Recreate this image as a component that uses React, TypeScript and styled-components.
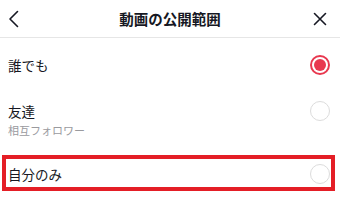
import React from 'react';
import styled, { createGlobalStyle } from 'styled-components';

const GlobalStyle = createGlobalStyle`
  html, body {
    margin: 0;
    padding: 0;
    background: #ffffff;
  }
  body {
    font-family: "Noto Sans CJK JP", "Noto Sans", sans-serif;
    color: #161823;
  }
`;

const Screen = styled.div`
  width: 340px;
  height: 208px;
  background: #ffffff;
  overflow: hidden;
`;

const Header = styled.div`
  height: 37px;
  border-bottom: 1px solid #e6e6e6;
  display: grid;
  grid-template-columns: 40px 1fr 40px;
  align-items: center;
`;

const IconButton = styled.div<{ $align: 'start' | 'end' }>`
  display: flex;
  justify-content: ${p => (p.$align === 'start' ? 'flex-start' : 'flex-end')};
  padding: ${p => (p.$align === 'start' ? '0 0 0 8px' : '0 13px 0 0')};
  svg {
    display: block;
  }
`;

const Title = styled.h1`
  margin: 0;
  text-align: center;
  font-size: 14.5px;
  font-weight: 700;
  line-height: 20px;
  color: #161823;
  letter-spacing: 0;
`;

const Row = styled.div<{ $height?: number }>`
  display: flex;
  align-items: center;
  justify-content: space-between;
  height: ${p => (p.$height ? `${p.$height}px` : 'auto')};
  padding: 0 10px 0 8px;
`;

const TopRow = styled(Row)`
  align-items: flex-start;
  padding-top: 10px;
  padding-bottom: 16px;
`;

const Label = styled.div`
  display: flex;
  flex-direction: column;
`;

const Name = styled.span`
  font-size: 13.5px;
  line-height: 20px;
  color: #161823;
`;

const Sub = styled.span`
  font-size: 11px;
  line-height: 18px;
  color: #9a9a9e;
`;

const Highlight = styled.div`
  margin: 0 5px 0 2px;
  height: 36px;
  box-sizing: border-box;
  border: 4px solid #e41e26;
`;

const HighlightRow = styled(Row)`
  height: 100%;
  padding: 1px 1px 0 2px;
  box-sizing: border-box;
`;

const Radio = styled.span<{ $checked?: boolean }>`
  flex: none;
  width: 20px;
  height: 20px;
  box-sizing: border-box;
  border-radius: 50%;
  border: ${p => (p.$checked ? '2px solid #e8384f' : '1px solid #dcdcdc')};
  display: flex;
  align-items: center;
  justify-content: center;
  &::after {
    content: '';
    display: ${p => (p.$checked ? 'block' : 'none')};
    width: 12px;
    height: 12px;
    border-radius: 50%;
    background: #e8384f;
  }
`;

const BackIcon = () => (
  <svg width="12" height="18" viewBox="0 0 12 18" fill="none">
    <path d="M9.5 1.5 L2 9 L9.5 16.5" stroke="#161823" strokeWidth="1.6" strokeLinecap="round" strokeLinejoin="round" />
  </svg>
);

const CloseIcon = () => (
  <svg width="14" height="14" viewBox="0 0 14 14" fill="none">
    <path d="M1.5 1.5 L12.5 12.5 M12.5 1.5 L1.5 12.5" stroke="#161823" strokeWidth="1.6" strokeLinecap="round" />
  </svg>
);

export default function App() {
  return (
    <>
      <GlobalStyle />
      <Screen>
        <Header>
          <IconButton $align="start">
            <BackIcon />
          </IconButton>
          <Title>動画の公開範囲</Title>
          <IconButton $align="end">
            <CloseIcon />
          </IconButton>
        </Header>

        <Row $height={53}>
          <Name>誰でも</Name>
          <Radio $checked />
        </Row>

        <TopRow>
          <Label>
            <Name>友達</Name>
            <Sub>相互フォロワー</Sub>
          </Label>
          <Radio />
        </TopRow>

        <Highlight>
          <HighlightRow>
            <Name>自分のみ</Name>
            <Radio />
          </HighlightRow>
        </Highlight>
      </Screen>
    </>
  );
}
